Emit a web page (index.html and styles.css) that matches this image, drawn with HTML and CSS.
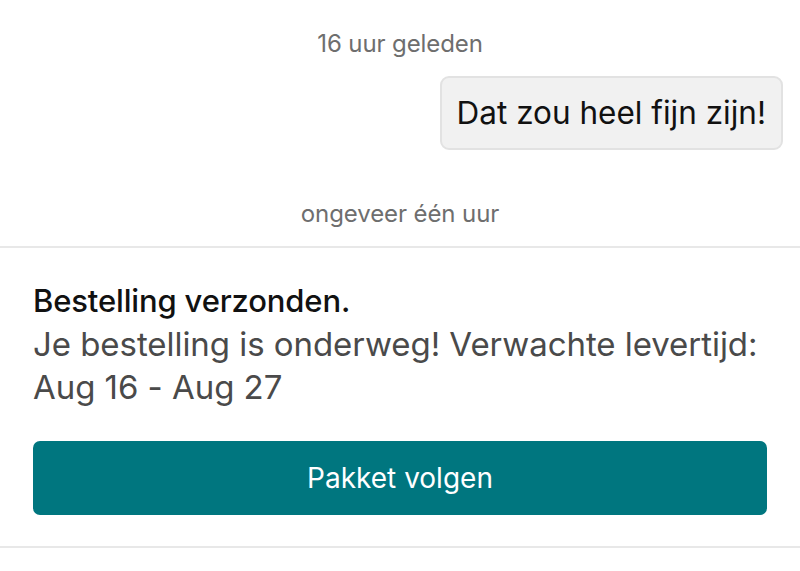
FILE: index.html
```html
<!DOCTYPE html>
<html lang="nl">
<head>
    <meta charset="UTF-8">
    <meta name="viewport" content="width=device-width, initial-scale=1.0">
    <title>Berichten</title>
    <link rel="stylesheet" href="styles.css">
</head>
<body>
    <div class="chat">
        <p class="timestamp first">16 uur geleden</p>
        <div class="message-row">
            <div class="bubble">Dat zou heel fijn zijn!</div>
        </div>
        <p class="timestamp second">ongeveer één uur</p>
    </div>

    <div class="order-card">
        <h3 class="order-title">Bestelling verzonden.</h3>
        <p class="order-text">Je bestelling is onderweg! Verwachte levertijd:<br>Aug 16 - Aug 27</p>
        <a href="#" class="track-button">Pakket volgen</a>
    </div>
</body>
</html>
```

FILE: styles.css
```css
body {
    font-family: 'Inter', 'Noto Sans', sans-serif;
    background-color: #fff;
    color: #111;
    margin: 0;
    padding: 0;
}

.chat {
    padding: 30px 17px 0 17px;
}

.timestamp {
    margin: 0;
    text-align: center;
    font-size: 24px;
    line-height: 28px;
    color: #6e6e6e;
    letter-spacing: -0.1px;
}

.timestamp.second {
    margin-top: 50px;
    padding-bottom: 18px;
}

.message-row {
    display: flex;
    justify-content: flex-end;
    margin-top: 18px;
}

.bubble {
    background-color: #f1f1f1;
    border: 2px solid #e2e2e2;
    border-radius: 9px;
    padding: 17px 15px;
    font-size: 31.5px;
    line-height: 36px;
    color: #111;
}

.order-card {
    border-top: 2px solid #e8e8e8;
    border-bottom: 2px solid #e8e8e8;
    padding: 33px 33px 31px 33px;
}

.order-title {
    margin: 0;
    font-size: 31px;
    font-weight: 500;
    line-height: 40px;
    color: #111;
    letter-spacing: -0.15px;
}

.order-text {
    margin: 2px 0 0 0;
    font-size: 33px;
    line-height: 43px;
    color: #4a4a4a;
    letter-spacing: -0.05px;
}

.track-button {
    display: block;
    margin-top: 32px;
    height: 74px;
    line-height: 74px;
    text-align: center;
    background-color: #00767f;
    color: #fff;
    text-decoration: none;
    border-radius: 7px;
    font-size: 28px;
}
```
